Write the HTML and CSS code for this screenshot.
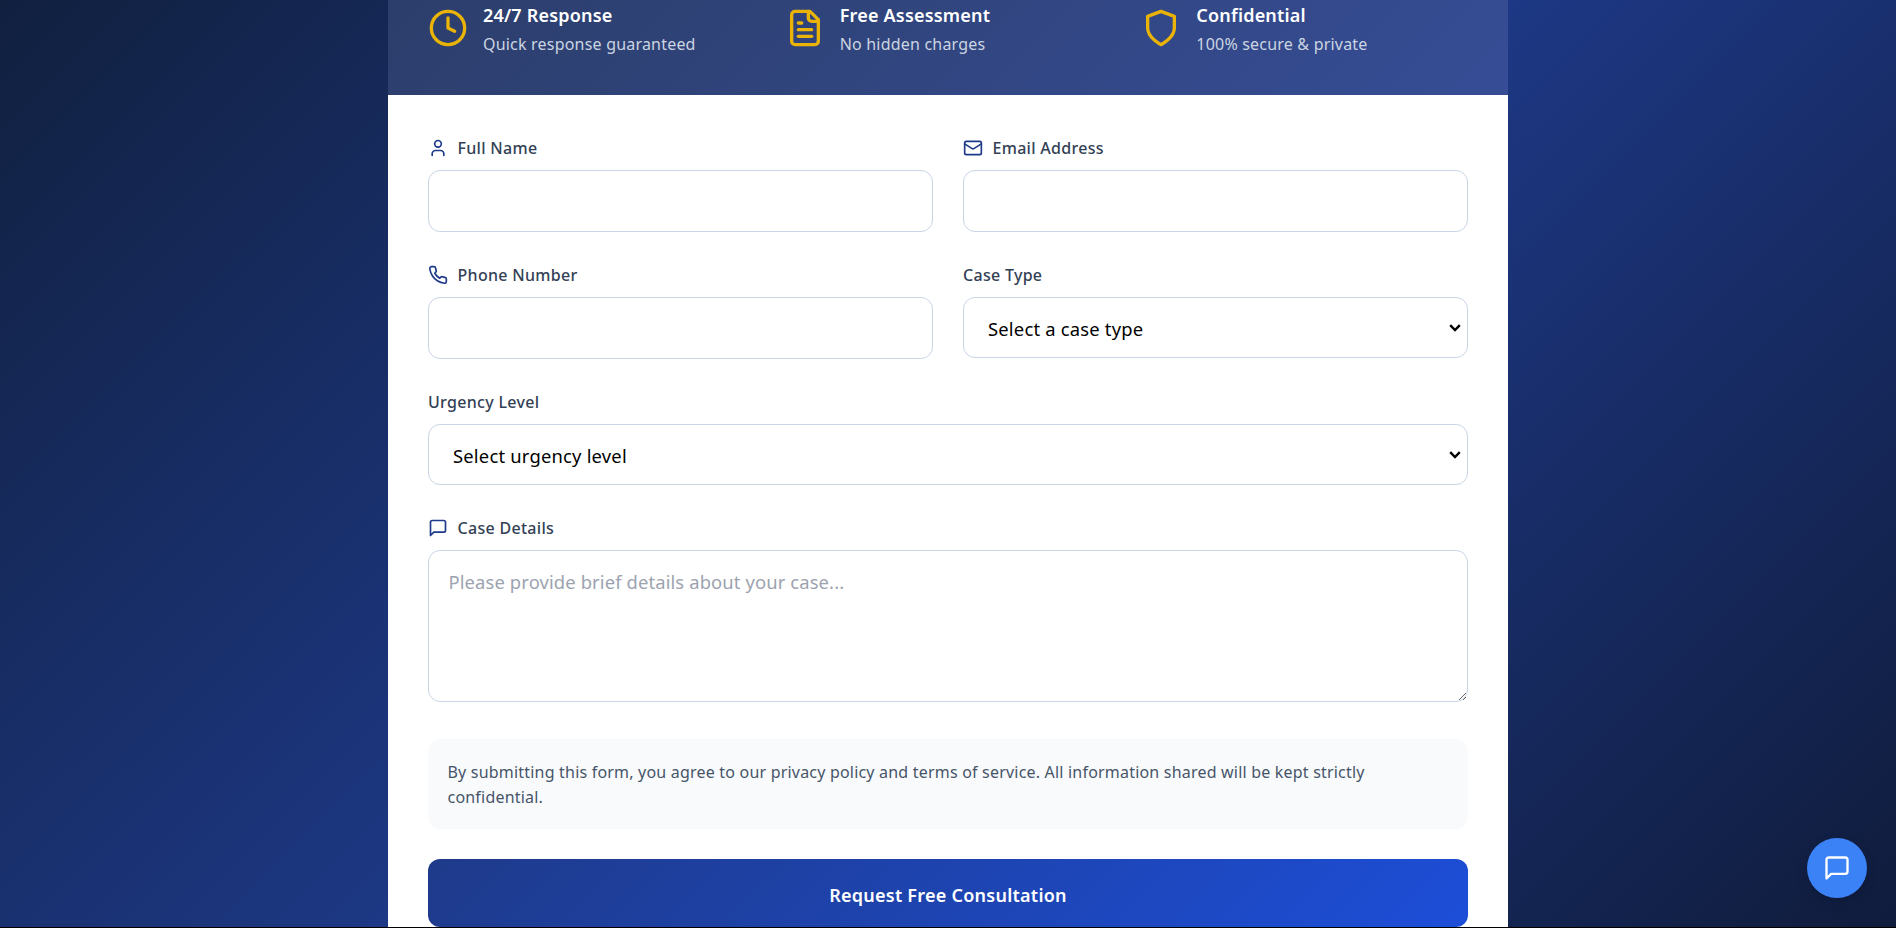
FILE: index.html
```html
<!DOCTYPE html>
<html lang="en">
<head>
  <meta charset="UTF-8" />
  <meta name="viewport" content="width=device-width, initial-scale=1.0"/>
  <title>Free Consultation</title>
  <link rel="stylesheet" href="styles.css">
</head>
<body>
  <div class="page">
    <div class="panel">
      <div class="panel-head">
        <div class="perk">
          <svg class="perk-icon" viewBox="0 0 24 24"><circle cx="12" cy="12" r="10"/><path d="M12 6v6l4 2"/></svg>
          <div>
            <h4>24/7 Response</h4>
            <p>Quick response guaranteed</p>
          </div>
        </div>
        <div class="perk">
          <svg class="perk-icon" viewBox="0 0 24 24"><path d="M15 2H6a2 2 0 0 0-2 2v16a2 2 0 0 0 2 2h12a2 2 0 0 0 2-2V7Z"/><path d="M14 2v4a2 2 0 0 0 2 2h4"/><path d="M10 9H8"/><path d="M16 13H8"/><path d="M16 17H8"/></svg>
          <div>
            <h4>Free Assessment</h4>
            <p>No hidden charges</p>
          </div>
        </div>
        <div class="perk">
          <svg class="perk-icon" viewBox="0 0 24 24"><path d="M12 22s8-4 8-10V5l-8-3-8 3v7c0 6 8 10 8 10z"/></svg>
          <div>
            <h4>Confidential</h4>
            <p>100% secure &amp; private</p>
          </div>
        </div>
      </div>

      <form class="consult-form">
        <div class="form-row">
          <div class="field">
            <label for="fullName">
              <svg class="label-icon" viewBox="0 0 24 24"><path d="M19 21v-2a4 4 0 0 0-4-4H9a4 4 0 0 0-4 4v2"/><circle cx="12" cy="7" r="4"/></svg>
              <span>Full Name</span>
            </label>
            <input type="text" id="fullName">
          </div>
          <div class="field">
            <label for="email">
              <svg class="label-icon" viewBox="0 0 24 24"><rect x="2" y="4" width="20" height="16" rx="2"/><path d="m22 7-8.97 5.7a1.94 1.94 0 0 1-2.06 0L2 7"/></svg>
              <span>Email Address</span>
            </label>
            <input type="email" id="email">
          </div>
        </div>

        <div class="form-row">
          <div class="field">
            <label for="phone">
              <svg class="label-icon" viewBox="0 0 24 24"><path d="M22 16.92v3a2 2 0 0 1-2.18 2 19.79 19.79 0 0 1-8.63-3.07 19.5 19.5 0 0 1-6-6 19.79 19.79 0 0 1-3.07-8.67A2 2 0 0 1 4.11 2h3a2 2 0 0 1 2 1.72 12.84 12.84 0 0 0 .7 2.81 2 2 0 0 1-.45 2.11L8.09 9.91a16 16 0 0 0 6 6l1.27-1.27a2 2 0 0 1 2.11-.45 12.84 12.84 0 0 0 2.81.7A2 2 0 0 1 22 16.92z"/></svg>
              <span>Phone Number</span>
            </label>
            <input type="tel" id="phone">
          </div>
          <div class="field">
            <label for="caseType"><span>Case Type</span></label>
            <select id="caseType">
              <option>Select a case type</option>
              <option>Civil</option>
              <option>Criminal</option>
              <option>Family</option>
            </select>
          </div>
        </div>

        <div class="field">
          <label for="urgency"><span>Urgency Level</span></label>
          <select id="urgency">
            <option>Select urgency level</option>
            <option>Low</option>
            <option>Medium</option>
            <option>High</option>
          </select>
        </div>

        <div class="field">
          <label for="details">
            <svg class="label-icon" viewBox="0 0 24 24"><path d="M21 15a2 2 0 0 1-2 2H7l-4 4V5a2 2 0 0 1 2-2h14a2 2 0 0 1 2 2z"/></svg>
            <span>Case Details</span>
          </label>
          <textarea id="details" rows="4" placeholder="Please provide brief details about your case..."></textarea>
        </div>

        <div class="notice">
          <p>By submitting this form, you agree to our privacy policy and terms of service. All information shared will be kept strictly confidential.</p>
        </div>

        <button type="button" class="submit-btn">Request Free Consultation</button>
      </form>
    </div>
  </div>

  <!-- Floating chat button -->
  <button class="chat-btn" aria-label="Chat">
    <svg viewBox="0 0 24 24"><path d="M21 15a2 2 0 0 1-2 2H7l-4 4V5a2 2 0 0 1 2-2h14a2 2 0 0 1 2 2z"/></svg>
  </button>
</body>
</html>
```

FILE: styles.css
```css
* {
  box-sizing: border-box;
}
html, body {
  height: 100%;
}
body {
  margin: 0;
  overflow: hidden;
  font-family: "Noto Sans", sans-serif;
  line-height: 1.6;
  letter-spacing: 0.2px;
  background: black;
}
.page {
  height: 927px;
  overflow: hidden;
  background: linear-gradient(135deg, #11203f 0%, #1e3a8a 50%, #101c3c 100%);
}
.panel {
  width: 1120px;
  margin: 0 auto;
  background: white;
}
.panel-head {
  display: grid;
  grid-template-columns: repeat(3, 1fr);
  gap: 30px;
  height: 95px;
  padding: 0 40px;
  background: linear-gradient(135deg, #2c3e6b 0%, #364d96 100%);
}
.perk {
  display: flex;
  gap: 15px;
  height: 60px;
}
.perk-icon {
  width: 40px;
  height: 40px;
  margin-top: 8px;
  fill: none;
  stroke: #eab308;
  stroke-width: 2;
  stroke-linecap: round;
  stroke-linejoin: round;
  flex-shrink: 0;
}
.perk h4 {
  margin: 1px 0 0;
  font-size: 18px;
  font-weight: 600;
  line-height: 28px;
  color: white;
}
.perk p {
  margin: 3px 0 0;
  font-size: 16px;
  color: #cbd5e1;
}

.consult-form {
  padding: 40px 40px 0;
}
.form-row {
  display: grid;
  grid-template-columns: 1fr 1fr;
  gap: 30px;
}
.field {
  margin-bottom: 30px;
}
.field label {
  display: flex;
  align-items: center;
  gap: 9.5px;
  height: 25px;
  margin-bottom: 10px;
  font-size: 16px;
  font-weight: 500;
  letter-spacing: 0.3px;
  color: #334155;
}
.field label span {
  padding-top: 2px;
}
.label-icon {
  width: 20px;
  height: 20px;
  fill: none;
  stroke: #1e3a8a;
  stroke-width: 2;
  stroke-linecap: round;
  stroke-linejoin: round;
}
.field input,
.field select,
.field textarea {
  display: block;
  width: 100%;
  padding: 18px 20px;
  border: 1px solid #c8d5e6;
  border-radius: 12px;
  background: white;
  font-family: inherit;
  font-size: 18.4px;
  letter-spacing: inherit;
  color: black;
}
.field input {
  height: 62px;
}
.field select {
  height: 61px;
  padding: 2px 30px 0 24px;
  appearance: none;
  background: white url("data:image/svg+xml,%3Csvg xmlns='http://www.w3.org/2000/svg' width='12' height='8' viewBox='0 0 12 8'%3E%3Cpath d='M1.2 1.2 6 6l4.8-4.8' fill='none' stroke='%23000' stroke-width='2.4'/%3E%3C/svg%3E") no-repeat right 6px center;
}
.field textarea {
  height: 152px;
  margin-bottom: 37px;
  padding: 18px 19.5px;
  letter-spacing: 0.12px;
  resize: vertical;
}
.field textarea::placeholder {
  color: #9ca3af;
}
.notice {
  margin-bottom: 30px;
  padding: 21px 19.5px 19px;
  border-radius: 12px;
  background: #f8fafc;
}
.notice p {
  margin: 0;
  font-size: 16px;
  line-height: 25px;
  color: #475569;
}
.submit-btn {
  display: block;
  width: 100%;
  height: 68px;
  padding: 3px 0 0;
  border: none;
  border-radius: 12px;
  background: linear-gradient(135deg, #1e3a8a, #1d4ed8);
  color: white;
  font-family: inherit;
  font-size: 18px;
  font-weight: 600;
  letter-spacing: 0.25px;
  cursor: pointer;
}

.chat-btn {
  position: fixed;
  right: 29px;
  bottom: 30px;
  display: flex;
  align-items: center;
  justify-content: center;
  width: 60px;
  height: 60px;
  padding: 0;
  border: none;
  border-radius: 50%;
  background: #3b82f6;
  box-shadow: 0 4px 12px rgba(0,0,0,0.15);
  cursor: pointer;
}
.chat-btn svg {
  width: 28px;
  height: 28px;
  fill: none;
  stroke: white;
  stroke-width: 2;
  stroke-linecap: round;
  stroke-linejoin: round;
}
```
